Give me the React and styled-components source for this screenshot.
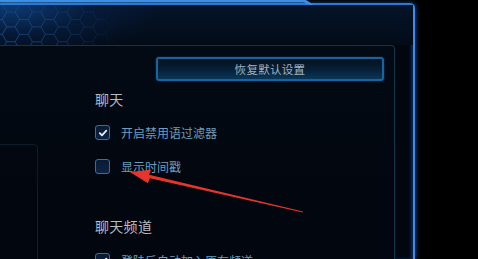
import React from 'react';
import styled, { createGlobalStyle } from 'styled-components';

const Global = createGlobalStyle`
  html, body {
    margin: 0;
    padding: 0;
    background: #000;
  }
  body {
    font-family: "Noto Sans CJK SC", "Noto Sans", sans-serif;
  }
`;

const Screen = styled.div`
  position: relative;
  width: 478px;
  height: 259px;
  overflow: hidden;
  background: #000;
  display: flex;
`;

const Window = styled.div`
  box-sizing: border-box;
  width: 415px;
  height: 256px;
  margin-top: 3px;
  flex-shrink: 0;
  display: flex;
  flex-direction: column;
  background: #02070f;
  border-top: 2px solid #2a78d8;
  border-right: 2px solid #3a8cf0;
  border-top-right-radius: 5px;
  box-shadow: 1px 0 5px rgba(40, 120, 230, 0.55), inset -2px 0 3px rgba(40, 110, 210, 0.35);
`;

const Header = styled.div`
  position: relative;
  height: 40px;
  flex-shrink: 0;
  background:
    radial-gradient(ellipse 150px 55px at 10px 0, rgba(14, 62, 124, 0.9), rgba(8, 36, 80, 0.45) 55%, transparent 100%),
    linear-gradient(180deg, #051429 0%, #030b17 100%);

  &::before {
    content: '';
    position: absolute;
    left: 0;
    top: -5px;
    width: 314px;
    height: 5px;
    background: #3b8fe4;
    clip-path: polygon(0 0, 306px 0, 314px 5px, 310px 5px, 304px 2.5px, 0 2.5px);
  }
`;

const HexLayer = styled.svg`
  display: block;
  width: 200px;
  height: 40px;
`;

const Panel = styled.div`
  flex: 1;
  margin-left: -10px;
  margin-right: 18px;
  border-top: 1px solid #0f3649;
  border-right: 1px solid #0f3649;
  border-top-right-radius: 4px;
  display: flex;
  flex-direction: column;
  background: linear-gradient(180deg, #020a14 0%, #02070f 60%);
`;

const ButtonRow = styled.div`
  display: flex;
  justify-content: flex-end;
  padding: 11px 10px 0 0;
`;

const ResetButton = styled.button`
  box-sizing: border-box;
  width: 228px;
  height: 24px;
  border: 2px solid #1a639e;
  border-radius: 3px;
  background: linear-gradient(180deg, #04121f 0%, #062038 55%, #0b3658 100%);
  box-shadow: 0 0 2px rgba(30, 110, 180, 0.6);
  color: #a3b0be;
  font-family: "Noto Sans CJK SC", sans-serif;
  font-size: 11.5px;
  letter-spacing: 0.3px;
  padding: 0;
`;

const Main = styled.div`
  display: flex;
  flex: 1;
`;

const Sidebar = styled.div`
  width: 48px;
  flex-shrink: 0;
  padding-top: 63px;
`;

const SideBox = styled.div`
  box-sizing: border-box;
  height: 140px;
  border: 1px solid #0c1d2e;
  border-radius: 4px;
`;

const Content = styled.div`
  padding-left: 57px;
  display: flex;
  flex-direction: column;
`;

const Heading = styled.div`
  color: #b7bcc3;
  font-size: 14px;
  line-height: 18px;
  margin-top: ${p => p.$top}px;
  letter-spacing: 0.3px;
`;

const Row = styled.div`
  display: flex;
  align-items: center;
  gap: 11px;
  height: 15px;
  margin-top: ${p => p.$top}px;
`;

const Box = styled.span`
  box-sizing: border-box;
  width: 15px;
  height: 15px;
  border: 1.5px solid #2d6fb6;
  border-radius: 3px;
  background: linear-gradient(180deg, #0a1a33 0%, #0d2342 100%);
  display: flex;
  align-items: center;
  justify-content: center;
  flex-shrink: 0;
`;

const Label = styled.span`
  color: #6b9fc0;
  font-size: 12px;
  line-height: 15px;
  white-space: nowrap;
`;

const Annotation = styled.svg`
  position: absolute;
  left: 0;
  top: 0;
  pointer-events: none;
`;

// flat-top honeycomb for the header texture
const hexes = [];
const S = 8.6;
const H = S * Math.sqrt(3) / 2;
for (let c = 0; c < 16; c++) {
  for (let r = 0; r < 4; r++) {
    const cx = c * 1.5 * S - 2;
    const cy = r * 2 * H + (c % 2 ? H : 0) + 7;
    hexes.push(`M${cx - S},${cy} L${cx - S / 2},${cy - H} L${cx + S / 2},${cy - H} L${cx + S},${cy} L${cx + S / 2},${cy + H} L${cx - S / 2},${cy + H} Z`);
  }
}

const Check = ({ checked, children, top }) => (
  <Row $top={top}>
    <Box>
      {checked && (
        <svg width="10" height="10" viewBox="0 0 10 10">
          <path d="M1.8 5.2 L4 7.4 L8.3 2.6" fill="none" stroke="#e2ebf4" strokeWidth="1.8" strokeLinecap="round" strokeLinejoin="round" />
        </svg>
      )}
    </Box>
    <Label>{children}</Label>
  </Row>
);

export default function App() {
  return (
    <>
      <Global />
      <Screen>
        <Window>
          <Header>
            <HexLayer viewBox="0 0 200 40">
              <defs>
                <linearGradient id="fade" x1="0" y1="0" x2="1" y2="0">
                  <stop offset="0" stopColor="#fff" stopOpacity="1" />
                  <stop offset="0.3" stopColor="#fff" stopOpacity="0.6" />
                  <stop offset="0.6" stopColor="#fff" stopOpacity="0" />
                </linearGradient>
                <mask id="hexmask">
                  <rect x="0" y="0" width="200" height="40" fill="url(#fade)" />
                </mask>
              </defs>
              <g mask="url(#hexmask)" fill="none" stroke="#1c528f" strokeOpacity="0.5" strokeWidth="1">
                {hexes.map((d, i) => <path key={i} d={d} />)}
              </g>
            </HexLayer>
          </Header>
          <Panel>
            <ButtonRow>
              <ResetButton>恢复默认设置</ResetButton>
            </ButtonRow>
            <Main>
              <Sidebar>
                <SideBox />
              </Sidebar>
              <Content>
                <Heading $top={9}>聊天</Heading>
                <Check checked top={17}>开启禁用语过滤器</Check>
                <Check top={19}>显示时间戳</Check>
                <Heading $top={43}>聊天频道</Heading>
                <Check checked top={18}>登陆后自动加入原有频道</Check>
              </Content>
            </Main>
          </Panel>
        </Window>
        <Annotation width="478" height="259" viewBox="0 0 478 259">
          <polygon
            points="130,172 151.1,169.7 149.1,174.7 302.9,211.5 303.1,212.5 149.9,178.3 147.9,183.3"
            fill="#e8352c"
          />
        </Annotation>
      </Screen>
    </>
  );
}
